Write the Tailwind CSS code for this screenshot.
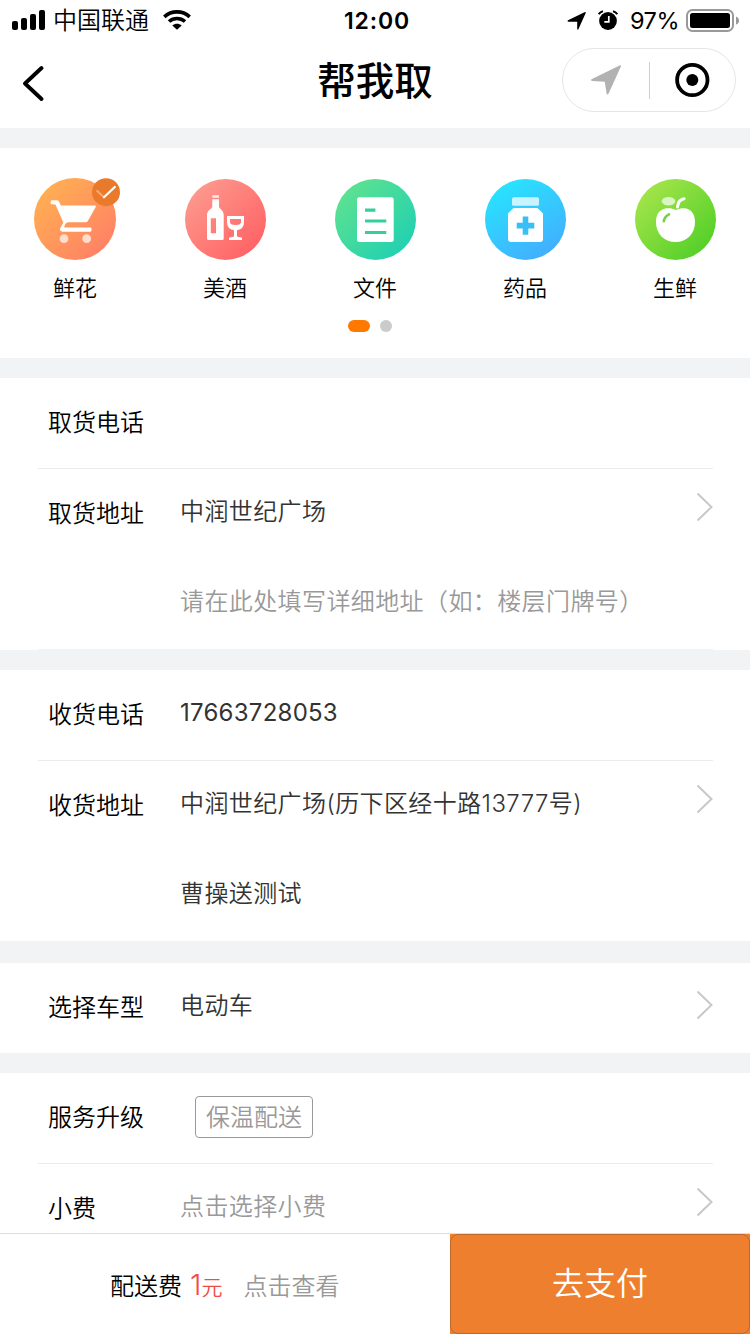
<!DOCTYPE html>
<html lang="zh-CN">
<head>
    <meta charset="UTF-8">
    <title>帮我取</title>
    <script src="https://cdn.jsdelivr.net/npm/@tailwindcss/browser@4"></script>
</head>
<body class="h-screen flex flex-col overflow-hidden bg-[#f2f3f5] text-black text-[24px] leading-[36px] font-[350] font-['Inter','Noto_Sans_CJK_SC',sans-serif]">
    <!-- Status Bar -->
    <div class="h-10 shrink-0 bg-white grid grid-cols-3 items-center">
        <div class="flex items-center pl-3">
            <svg class="w-[33px] h-5" viewBox="0 0 33 20">
                <rect x="0" y="11" width="6" height="9" rx="2"/>
                <rect x="9" y="8" width="6" height="12" rx="2"/>
                <rect x="18" y="4" width="6" height="16" rx="2"/>
                <rect x="27" y="0" width="6" height="20" rx="2"/>
            </svg>
            <span class="ml-2 pt-[2px]">中国联通</span>
            <svg class="ml-[14px] w-7 h-5" viewBox="0 0 28 20" fill="none" stroke="#000" stroke-width="3.6">
                <path d="M1.3 6.8C8.5 0.2 19.500 0.2 26.700 6.800"/>
                <path d="M6 11.500C10.500 7.500 17.500 7.500 22 11.500"/>
                <path d="M14 19.800L9.300 15.500C12 13.200 16 13.200 18.700 15.500Z" fill="#000" stroke="none"/>
            </svg>
        </div>
        <div class="text-center font-semibold text-[23px] tracking-[0.9px] pl-1 pt-[2px]">12:00</div>
        <div class="flex items-center justify-end pr-[10px]">
            <svg class="w-5 h-5" viewBox="0 0 20 20">
                <path d="M1 10.200L17.500 2.200Q19.300 1.500 18.600 3.300L11.500 19Q10.500 20.500 10.200 18.700V11.800H1.500Q-0.200 11.200 1 10.200Z"/>
            </svg>
            <svg class="ml-[11px] w-5 h-5" viewBox="0 0 20 20">
                <circle cx="10" cy="11" r="8.900"/>
                <path d="M0.800 4.200Q2.200 1.700 5 1.200M19.200 4.200Q17.800 1.700 15 1.200" fill="none" stroke="#000" stroke-width="2"/>
                <path d="M10.800 6V11.800H6.300" fill="none" stroke="#fff" stroke-width="1.700"/>
            </svg>
            <span class="ml-3 pt-[2px] text-[23.500px] font-normal tracking-[-0.5px]">97%</span>
            <svg class="ml-[7px] w-[54px] h-6" viewBox="0 0 54 24">
                <rect x="1" y="2" width="46" height="21" rx="5.500" fill="none" stroke="#999" stroke-width="2"/>
                <rect x="4" y="5" width="40" height="15" rx="2.500"/>
                <path d="M50 8.500Q53 9.500 53 12.500T50 16.500Z" fill="#999"/>
            </svg>
        </div>
    </div>

    <!-- Navigation Bar -->
    <nav class="h-[88px] shrink-0 bg-white grid grid-cols-3">
        <svg class="mt-[25px] ml-[22px] w-6 h-9" viewBox="0 0 24 36" fill="none" stroke="#000" stroke-width="3.800" stroke-linecap="round" stroke-linejoin="round">
            <path d="M19.500 3L3 18.500L19.500 34"/>
        </svg>
        <h1 class="text-center text-[38.500px] leading-[82px] font-medium">帮我取</h1>
        <div class="justify-self-end mt-2 mr-[14px] w-[174px] h-16 flex items-center rounded-full border border-[#e6e6e6]">
            <svg class="ml-[27px] w-8 h-8" viewBox="0 0 32 32" fill="#b2b2b2">
                <path d="M1.500 15.300L30 1.300Q31.300 1 31 2.300L18.500 29.800Q17.300 31.200 16.600 29.700L14.800 17.800L1.800 16.900Q0.200 16.200 1.500 15.300Z"/>
            </svg>
            <span class="ml-[27px] w-px h-[37px] bg-[#cfcfcf]"></span>
            <svg class="ml-[25px] w-9 h-9" viewBox="0 0 36 36">
                <circle cx="17.300" cy="18" r="15.200" fill="none" stroke="#000" stroke-width="3.800"/>
                <circle cx="17.300" cy="18" r="6"/>
            </svg>
        </div>
    </nav>

    <main class="flex-1 min-h-0 overflow-hidden">
        <!-- Goods category -->
        <section class="mt-5 h-[210px] bg-white pt-[29px]">
            <div class="grid grid-cols-5 text-center text-[22px]">
                <div>
                    <svg class="mx-auto w-[90px] h-[84px]" viewBox="0 0 90 84">
                        <defs><linearGradient id="flower" x1="0" y1="0" x2="1" y2="1"><stop offset="0.1" stop-color="#ffb052"/><stop offset="0.9" stop-color="#ff8066"/></linearGradient></defs>
                        <circle cx="45" cy="42" r="41" fill="url(#flower)"/>
                        <path d="M21.500 23.200H27Q28.500 23.200 29.200 24.700L30.800 28.500H65.200Q66.300 28.700 65.800 29.800L58 43.800Q57.200 45.300 55.500 45.300H37.700Q34.500 46.500 34.200 50.600H60.300Q61.500 50.600 61.500 52V53.300Q61.500 54.700 60.300 54.700H32.500Q30 54.500 29.800 52L33.300 45.500L25.500 27.500L21.500 27.200Q20.500 27.200 20.500 25.200Z" fill="#fff"/>
                        <circle cx="34" cy="61.700" r="4.400" fill="#ffddcd"/>
                        <circle cx="56.700" cy="61.700" r="4.400" fill="#ffddcd"/>
                        <circle cx="76" cy="15.200" r="14" fill="#ea7a2b"/>
                        <path d="M67.200 14L74 20.200" stroke="#f8a56c" stroke-width="2.200" stroke-linecap="round"/>
                        <path d="M74 20.200L84.800 10" stroke="#fff" stroke-width="2.200" stroke-linecap="round"/>
                    </svg>
                    <p class="mt-[9px]">鲜花</p>
                </div>
                <div>
                    <svg class="mx-auto w-[90px] h-[84px]" viewBox="0 0 90 84">
                        <defs><linearGradient id="wine" x1="0" y1="0" x2="1" y2="1"><stop offset="0.1" stop-color="#fd9a8e"/><stop offset="0.9" stop-color="#ff6164"/></linearGradient></defs>
                        <circle cx="45.500" cy="42.400" r="40.500" fill="url(#wine)"/>
                        <rect x="32.300" y="18.200" width="6.700" height="2.600" fill="#ffe3e0"/>
                        <path fill-rule="evenodd" d="M32.300 22.300H39V29.500C39.200 32 43.700 33 43.700 38V61.500Q43.700 63 42.200 63H28.500Q27 63 27 61.500V38C27 33 32.100 32 32.300 29.500ZM30.800 41.300V56.300H36V41.300Z" fill="#fff"/>
                        <path fill-rule="evenodd" d="M47 39H64V45Q64 52.300 57 53.200V59.500L62 60.800V63H49V60.800L54 59.500V53.200Q47 52.300 47 45ZM50 42V45.500Q50.500 48 55.500 48T61 45.500V42Z" fill="#fff"/>
                    </svg>
                    <p class="mt-[9px]">美酒</p>
                </div>
                <div>
                    <svg class="mx-auto w-[90px] h-[84px]" viewBox="0 0 90 84">
                        <defs><linearGradient id="doc" x1="0" y1="0" x2="1" y2="1"><stop offset="0.1" stop-color="#5fe28f"/><stop offset="0.9" stop-color="#1fd0b3"/></linearGradient></defs>
                        <circle cx="45.500" cy="42.400" r="40.500" fill="url(#doc)"/>
                        <rect x="27" y="20.300" width="36.700" height="44.700" rx="2.500" fill="#fff"/>
                        <path d="M35 33.200H45.400M35 44H56.300M35 55.500H56.300" stroke="#35cf9c" stroke-width="3.200"/>
                    </svg>
                    <p class="mt-[9px]">文件</p>
                </div>
                <div>
                    <svg class="mx-auto w-[90px] h-[84px]" viewBox="0 0 90 84">
                        <defs><linearGradient id="drug" x1="0.200" y1="0" x2="0.800" y2="1"><stop offset="0.1" stop-color="#2ae0fe"/><stop offset="0.95" stop-color="#43aefe"/></linearGradient></defs>
                        <circle cx="45.500" cy="42.400" r="40.500" fill="url(#drug)"/>
                        <rect x="32" y="20.200" width="27" height="8.500" rx="1.500" fill="#c8f3ff"/>
                        <path d="M33.500 31H57.500L63 36.500V62Q63 65 60 65H31Q28 65 28 62V36.500Z" fill="#fff"/>
                        <path d="M45.500 39.500V57.800M36.700 48.600H54.300" stroke="#38bff6" stroke-width="5.600"/>
                    </svg>
                    <p class="mt-[9px]">药品</p>
                </div>
                <div>
                    <svg class="mx-auto w-[90px] h-[84px]" viewBox="0 0 90 84">
                        <defs><linearGradient id="fresh" x1="0" y1="0" x2="1" y2="1"><stop offset="0.1" stop-color="#a6e54b"/><stop offset="0.9" stop-color="#51cf27"/></linearGradient></defs>
                        <circle cx="45.500" cy="42.400" r="40.500" fill="url(#fresh)"/>
                        <ellipse cx="38.500" cy="24.300" rx="6.800" ry="4.200" fill="#d9f5c2"/>
                        <path d="M47.500 30Q48 23 54 21.800" fill="none" stroke="#fff" stroke-width="3" stroke-linecap="round"/>
                        <path d="M46 33C50 31 54 31 57 31.700C62 33 65 38 65 45C65 57 57 65 45.500 65S26 57 26 45C26 38 29 33 34.500 31.700C38 31 42 31 46 33Z" fill="#fff"/>
                        <path d="M33.800 44.300Q34.500 39.500 39 37.300" fill="none" stroke="#6fd53a" stroke-width="2.600" stroke-linecap="round"/>
                    </svg>
                    <p class="mt-[9px]">生鲜</p>
                </div>
            </div>
            <div class="mt-[14px] flex justify-center gap-[10px] pr-[10px]">
                <span class="w-[22px] h-3 rounded-full bg-[#ff7800]"></span>
                <span class="w-3 h-3 rounded-full bg-[#cbcbcb]"></span>
            </div>
        </section>

        <!-- Pickup -->
        <section class="mt-5 h-[272px] bg-white pl-[38px] pr-[37px]">
            <div class="h-[91px] flex pt-[27px] pl-[10px] border-b border-[#ebebeb]">
                <span class="w-[132px]">取货电话</span>
            </div>
            <div class="h-[181px] flex pt-[25px] pl-[10px] border-b border-[#f2f3f5]">
                <span class="w-[132px] pt-[2px]">取货地址</span>
                <div class="flex-1 tracking-[0.4px] text-[#333]">
                    <p>中润世纪广场</p>
                    <p class="mt-[54px] text-[#999]">请在此处填写详细地址（如：楼层门牌号）</p>
                </div>
                <svg class="-mt-[2px] w-[17px] h-[30px]" viewBox="0 0 17 30" fill="none" stroke="#c8c8cc" stroke-width="2"><path d="M1.500 1.500L15.500 15L1.500 28.500"/></svg>
            </div>
        </section>

        <!-- Delivery -->
        <section class="mt-5 h-[271px] bg-white pl-[38px] pr-[37px]">
            <div class="h-[91px] flex pt-[25px] pl-[10px] border-b border-[#ebebeb]">
                <span class="w-[132px] pt-[2px]">收货电话</span>
                <span class="font-normal tracking-[0.25px] text-[#333]">17663728053</span>
            </div>
            <div class="h-[180px] flex pt-[25px] pl-[10px]">
                <span class="w-[132px] pt-[2px]">收货地址</span>
                <div class="flex-1 tracking-[0.4px] text-[#333]">
                    <p>中润世纪广场(历下区经十路13777号)</p>
                    <p class="mt-[54px]">曹操送测试</p>
                </div>
                <svg class="-mt-[2px] w-[17px] h-[30px]" viewBox="0 0 17 30" fill="none" stroke="#c8c8cc" stroke-width="2"><path d="M1.500 1.500L15.500 15L1.500 28.500"/></svg>
            </div>
        </section>

        <!-- Vehicle -->
        <section class="mt-[22px] h-[90px] bg-white flex pt-[25px] pl-12 pr-[37px]">
            <span class="w-[132px] pt-[2px]">选择车型</span>
            <span class="flex-1 tracking-[0.4px] text-[#333]">电动车</span>
            <svg class="mt-[2px] w-[17px] h-[30px]" viewBox="0 0 17 30" fill="none" stroke="#c8c8cc" stroke-width="2"><path d="M1.500 1.500L15.500 15L1.500 28.500"/></svg>
        </section>

        <!-- Extras -->
        <section class="mt-5 h-[200px] bg-white pl-[38px] pr-[37px]">
            <div class="h-[91px] flex pt-[23px] pl-[10px] border-b border-[#ebebeb]">
                <span class="w-[147px] pt-[4px]">服务升级</span>
                <span class="w-[118px] h-[42px] border border-[#999] rounded-[4px] text-center leading-[42px] text-[#999]">保温配送</span>
            </div>
            <div class="flex pt-[24px] pl-[10px]">
                <span class="w-[132px] pt-[3px]">小费</span>
                <span class="flex-1 pt-px tracking-[0.4px] text-[#999]">点击选择小费</span>
                <svg class="-mt-px w-[17px] h-[30px]" viewBox="0 0 17 30" fill="none" stroke="#c8c8cc" stroke-width="2"><path d="M1.500 1.500L15.500 15L1.500 28.500"/></svg>
            </div>
        </section>
    </main>

    <!-- Payment Bar -->
    <footer class="h-[101px] shrink-0 bg-white border-t border-[#dedede] flex">
        <div class="w-[450px] flex items-baseline pt-[33px] pl-[110px]">
            <span>配送费</span>
            <span class="ml-2 text-[29px] text-[#f04b46]">1</span>
            <span class="text-[21px] text-[#f04b46]">元</span>
            <span class="ml-[21px] text-[#999]">点击查看</span>
        </div>
        <div class="flex-1 bg-[#ee7f2f]">
            <button class="w-full h-full rounded-[8px] border border-[#c0682b] text-white text-[32px]">去支付</button>
        </div>
    </footer>
</body>
</html>
